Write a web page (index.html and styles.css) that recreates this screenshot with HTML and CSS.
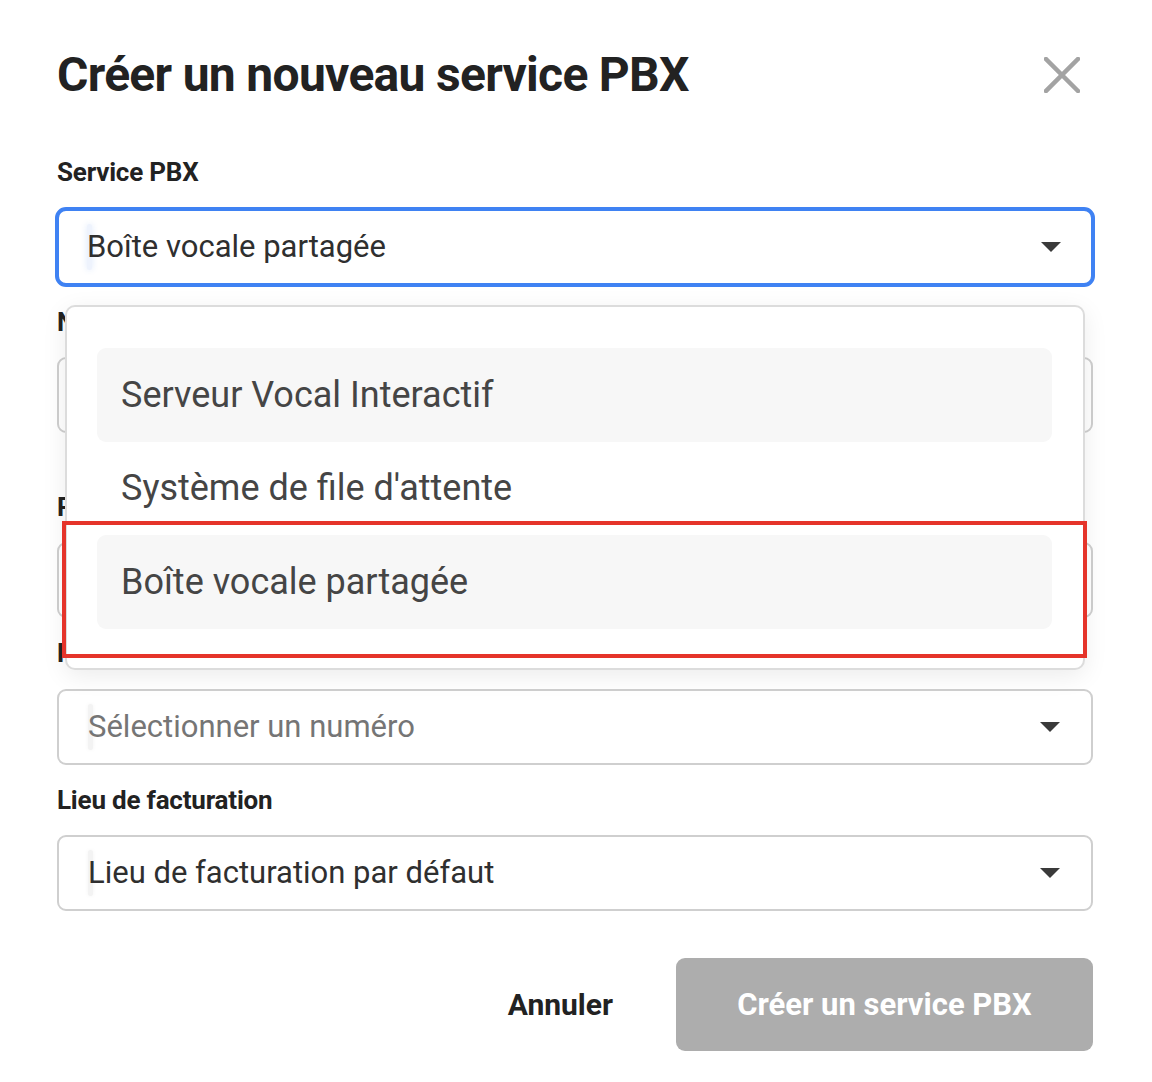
FILE: index.html
```html
<!DOCTYPE html>
<html lang="fr">
<head>
<meta charset="utf-8">
<title>Créer un nouveau service PBX</title>
<link rel="stylesheet" href="styles.css">
</head>
<body>
<div class="modal">
  <header class="modal-header">
    <h1 class="modal-title">Créer un nouveau service PBX</h1>
    <button class="close-btn" aria-label="Fermer">
      <svg width="36" height="36" viewBox="0 0 36 36"><path d="M2 2 L34 34 M34 2 L2 34" stroke="#a3a3a3" stroke-width="4.5" stroke-linecap="square" fill="none"/></svg>
    </button>
  </header>

  <form class="form">
    <div class="field field-service">
      <label class="field-label">Service PBX</label>
      <div class="select select-focused">
        <span class="cursor cursor-blue"></span>
        <span class="select-value">Boîte vocale partagée</span>
        <span class="caret"></span>
      </div>

      <div class="menu">
        <div class="menu-item menu-item-hover">Serveur Vocal Interactif</div>
        <div class="menu-item">Système de file d'attente</div>
        <div class="menu-item menu-item-selected">Boîte vocale partagée</div>
        <div class="annotation"></div>
      </div>
    </div>

    <div class="field field-spaced">
      <label class="field-label">Nom du service</label>
      <div class="select">
        <span class="cursor"></span>
        <span class="select-value"></span>
      </div>
    </div>

    <div class="field">
      <label class="field-label">Poste</label>
      <div class="select">
        <span class="cursor"></span>
        <span class="select-value"></span>
      </div>
    </div>

    <div class="field field-number">
      <label class="field-label">Numéro</label>
      <div class="select">
        <span class="cursor"></span>
        <span class="select-value placeholder">Sélectionner un numéro</span>
        <span class="caret"></span>
      </div>
    </div>

    <div class="field">
      <label class="field-label">Lieu de facturation</label>
      <div class="select">
        <span class="cursor"></span>
        <span class="select-value">Lieu de facturation par défaut</span>
        <span class="caret"></span>
      </div>
    </div>
  </form>

  <footer class="actions">
    <button class="btn-cancel" type="button">Annuler</button>
    <button class="btn-primary" type="button" disabled>Créer un service PBX</button>
  </footer>
</div>
</body>
</html>
```

FILE: styles.css
```css
* { box-sizing: border-box; }

html, body {
  margin: 0;
  padding: 0;
  background: #ffffff;
}

body {
  font-family: Roboto, "Liberation Sans", Arial, sans-serif;
  color: #222;
}

.modal {
  width: 1152px;
  height: 1082px;
  padding: 45px 59px 0 57px;
  overflow: hidden;
}

.modal-header {
  display: flex;
  justify-content: space-between;
  align-items: center;
  height: 60px;
}

.modal-title {
  margin: 0;
  font-size: 48px;
  font-weight: 700;
  line-height: 60px;
  color: #222;
  letter-spacing: -0.7px;
}

.close-btn {
  border: 0;
  background: none;
  padding: 0;
  margin-right: 13px;
  width: 36px;
  height: 36px;
  display: flex;
}

.form {
  display: flex;
  flex-direction: column;
  gap: 21px;
  margin-top: 53px;
}

.field {
  display: flex;
  flex-direction: column;
  gap: 21px;
}

.field-service { position: relative; }

.field-spaced { margin-bottom: 39px; }

.field-number { gap: 22px; }

.field-label {
  font-size: 26px;
  font-weight: 700;
  line-height: 28px;
  color: #222;
  letter-spacing: -0.2px;
}

.select {
  position: relative;
  height: 76px;
  border: 2px solid #cfcfcf;
  border-radius: 9px;
  display: flex;
  align-items: center;
  padding: 0 30px 0 29px;
  background: #fff;
}

.select-focused {
  height: 80px;
  margin-left: -2px;
  margin-right: -2px;
  border: 4px solid #3f82f3;
  border-radius: 11px;
  padding-left: 28px;
  padding-right: 29px;
}

.cursor {
  position: absolute;
  left: 29px;
  top: 50%;
  width: 5px;
  height: 46px;
  margin-top: -23px;
  border-radius: 3px;
  background: #f3f3f3;
  box-shadow: 0 0 4px rgba(0,0,0,0.05);
}

.cursor-blue {
  left: 28px;
  background: #eef3fd;
  box-shadow: 0 0 6px rgba(61,128,240,0.18);
}

.select-value {
  position: relative;
  flex: 1;
  font-size: 31px;
  line-height: 36px;
  color: #2f2f2f;
}

.placeholder { color: #757575; }

.caret {
  width: 0;
  height: 0;
  border-left: 10px solid transparent;
  border-right: 10px solid transparent;
  border-top: 10px solid #3a3a3a;
  margin-right: 1px;
}

.menu {
  position: absolute;
  left: 8px;
  top: 147px;
  width: 1020px;
  height: 365px;
  background: #fff;
  border: 2px solid #dcdcdc;
  border-radius: 10px;
  box-shadow: 0 6px 24px rgba(0,0,0,0.08);
  padding: 41px 31px 0 30px;
  z-index: 5;
}

.menu-item {
  height: 93.5px;
  display: flex;
  align-items: center;
  padding-left: 24px;
  font-size: 36px;
  color: #454545;
  border-radius: 9px;
}

.menu-item-hover,
.menu-item-selected {
  background: #f7f7f7;
}

.annotation {
  position: absolute;
  left: -5px;
  top: 214px;
  width: 1025px;
  height: 137px;
  border: 4px solid #e5342a;
}

.actions {
  display: flex;
  justify-content: flex-end;
  align-items: center;
  gap: 63px;
  margin-top: 47px;
}

.btn-cancel {
  border: 0;
  background: none;
  padding: 0;
  font-family: inherit;
  font-size: 30px;
  font-weight: 700;
  color: #222;
}

.btn-primary {
  width: 417px;
  height: 93px;
  border: 0;
  border-radius: 9px;
  background: #adadad;
  color: #fff;
  font-family: inherit;
  font-size: 31px;
  font-weight: 700;
}
```
